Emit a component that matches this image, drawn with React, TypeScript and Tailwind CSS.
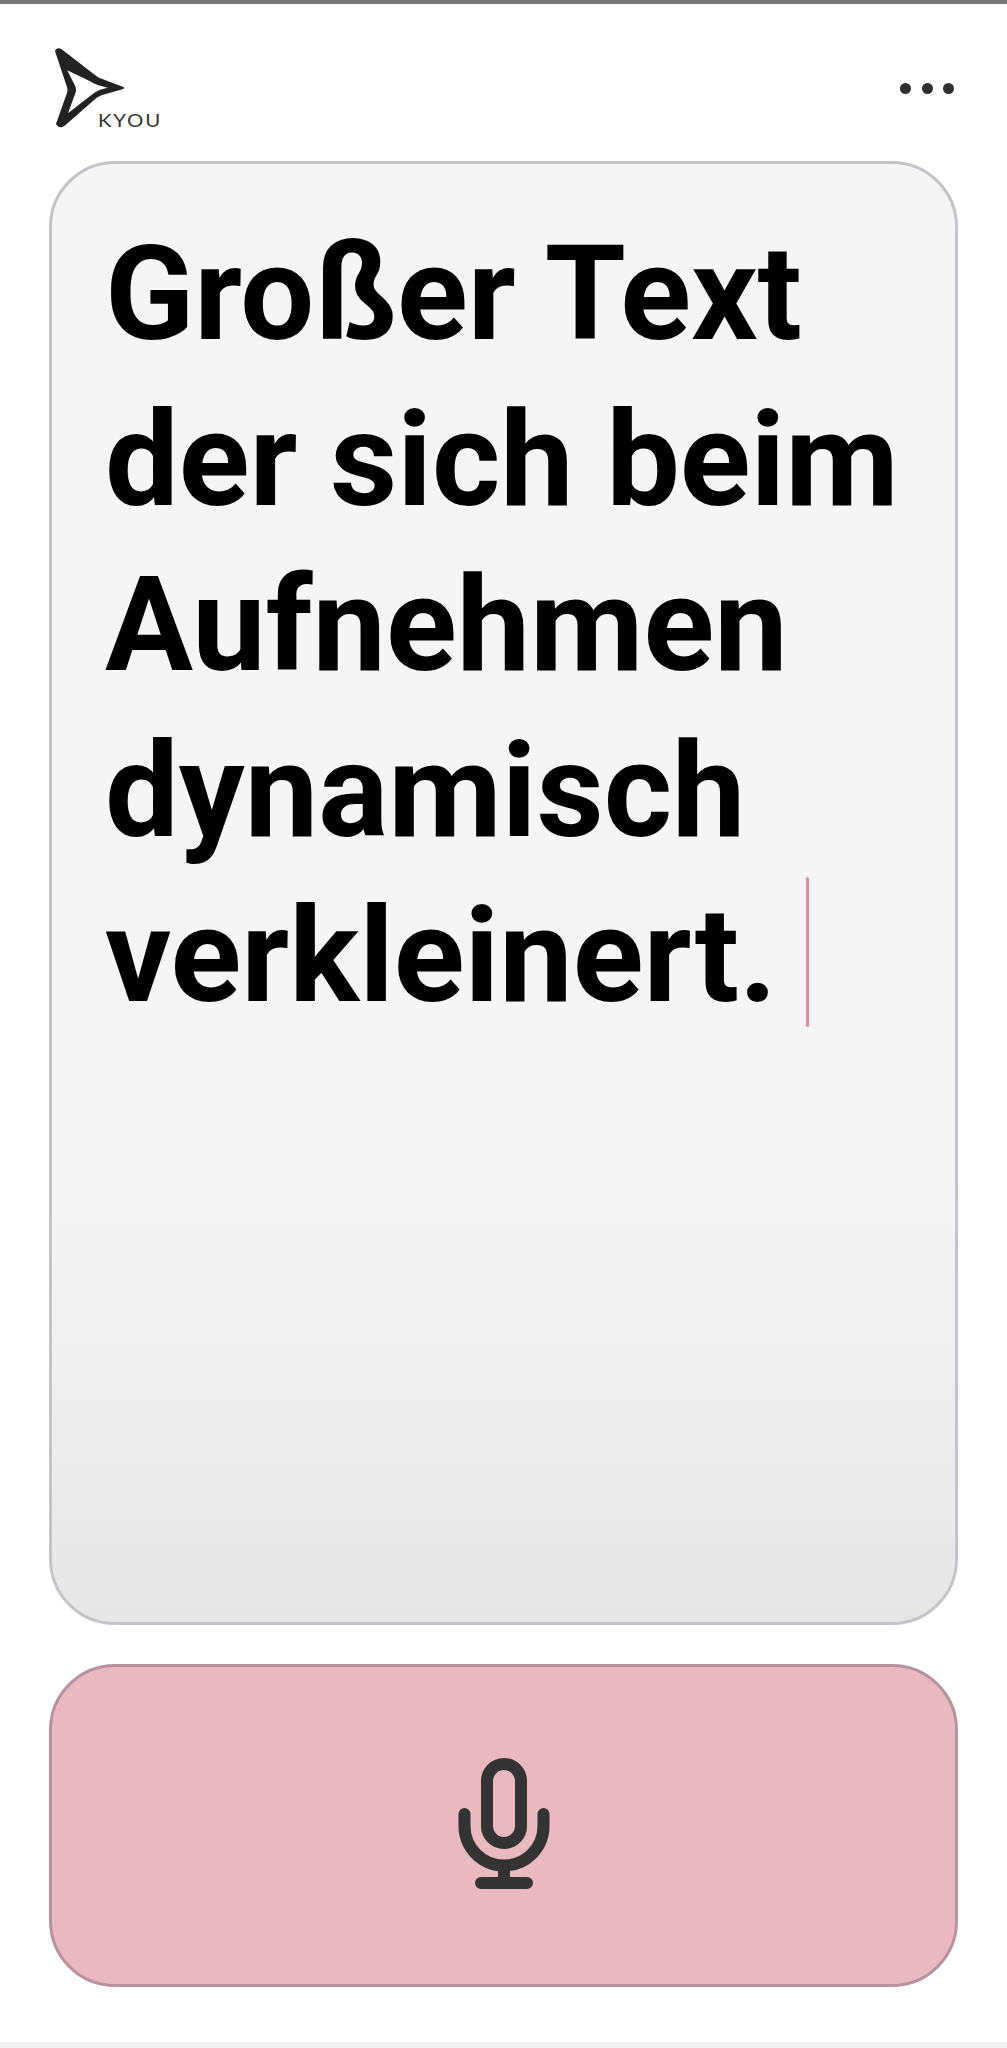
export default function App() {
  return (
    <div className="flex h-[2048px] w-[1007px] flex-col bg-white font-['Roboto',sans-serif]">
      <div className="h-[4px] bg-[#777777]" />

      {/* Header */}
      <header className="flex h-[157px] items-start justify-between pl-[52px] pr-[53px] pt-[44px]">
        <div className="relative h-[84px] w-[112px]">
          <svg width="76" height="84" viewBox="0 0 76 84" fill="none">
            <path
              fillRule="evenodd"
              d="M4 3 Q6 0 9 2 L44 29 Q46 31 50 32 L71 40 L50 46 Q47 47 44 49 L12 77 Q8 80 5 76 L16 45 Q17 42 16 39 Z M13 20 L22 38 Q24 42 22 46 L14 68 L41 47 Q47 42 60 40 L46 36 Q42 35 38 32 Z"
              fill="#222222"
              stroke="#222222"
              strokeWidth="2"
              strokeLinejoin="round"
            />
          </svg>
          <span className="absolute left-[46px] top-[63px] origin-left scale-x-[1.2] font-['Lato',sans-serif] text-[17px] leading-[20px] tracking-[1.5px] text-[#333333]">
            KYOU
          </span>
        </div>
        <div className="mt-[35px] flex gap-[10.5px]">
          <span className="h-[11px] w-[11px] rounded-full bg-[#2f2f2f]" />
          <span className="h-[11px] w-[11px] rounded-full bg-[#2f2f2f]" />
          <span className="h-[11px] w-[11px] rounded-full bg-[#2f2f2f]" />
        </div>
      </header>

      {/* Text card */}
      <main className="mx-[49px] h-[1464px] rounded-[66px] border-[3px] border-[#c4c4c8] bg-gradient-to-b from-[#f5f5f5] from-[70%] to-[#e6e6e6] pl-[53px]">
        <p className="mt-[48px] text-[131px] font-bold leading-[165.5px] text-black">
          Großer Text
          <br />
          der sich beim
          <br />
          Aufnehmen
          <br />
          dynamisch
          <br />
          verkleinert.
          <span className="ml-[29px] inline-block h-[150px] w-[3px] rounded-full bg-[#dc8fa0] align-[-26px]" />
        </p>
      </main>

      {/* Record button */}
      <button className="mx-[49px] mt-[39px] flex h-[323px] items-center justify-center rounded-[66px] border-[3px] border-[#b8939f] bg-[#e9b9c2]">
        <svg className="mb-[2px]" width="100" height="140" viewBox="0 0 100 140" fill="none" stroke="#333333" strokeWidth="12" strokeLinecap="round">
          <rect x="33" y="9" width="34" height="79" rx="17" />
          <path d="M10.5 59 V71 A39.5 39.5 0 0 0 89.5 71 V59" />
          <path d="M50 111 V128 M27 128 H73" />
        </svg>
      </button>

      <div className="flex-1" />
      <div className="h-[6px] bg-[#f3f3f3]" />
    </div>
  );
}
